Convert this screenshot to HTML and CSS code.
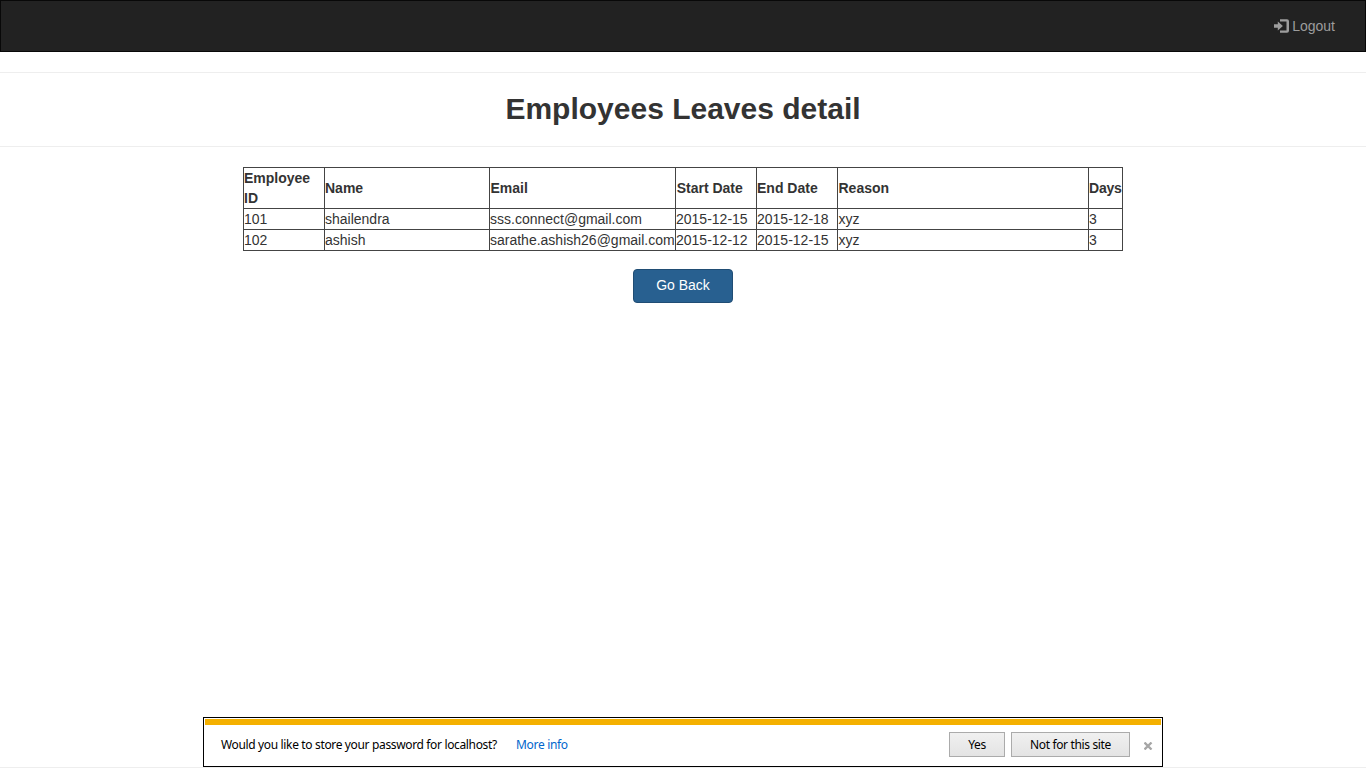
FILE: index.html
```html
<!DOCTYPE html>
<html lang="en">
<head>
<meta charset="utf-8">
<title>Employees Leaves detail</title>
<link rel="stylesheet" href="styles.css">
</head>
<body>
<nav class="navbar">
  <a class="logout">
    <svg class="login-icon" width="16" height="14" viewBox="0 0 16 14">
      <path d="M0 5.300h3.800V2.500L8.900 7 3.800 11.500V8.700H0z" fill="currentColor"/>
      <path d="M6 .2h7a2 2 0 0 1 2 2v9.600a2 2 0 0 1-2 2H6v-2.300h6.500v-9H6z" fill="currentColor"/>
    </svg>
    <span>Logout</span>
  </a>
</nav>
<header class="title"><h1>Employees Leaves detail</h1></header>
<main class="content">
  <table class="leaves">
    <colgroup><col class="c-id"><col class="c-name"><col class="c-email"><col class="c-date"><col class="c-date"><col class="c-reason"><col class="c-days"></colgroup>
    <thead>
      <tr><th>Employee ID</th><th>Name</th><th>Email</th><th class="start">Start Date</th><th>End Date</th><th>Reason</th><th class="days">Days</th></tr>
    </thead>
    <tbody>
      <tr><td>101</td><td>shailendra</td><td>sss.connect@gmail.com</td><td>2015-12-15</td><td>2015-12-18</td><td>xyz</td><td>3</td></tr>
      <tr><td>102</td><td>ashish</td><td>sarathe.ashish26@gmail.com</td><td>2015-12-12</td><td>2015-12-15</td><td>xyz</td><td>3</td></tr>
    </tbody>
  </table>
  <button class="go-back">Go Back</button>
</main>
<aside class="prompt">
  <div class="prompt-stripe"></div>
  <div class="prompt-row">
    <span class="question">Would you like to store your password for localhost?</span>
    <a class="more">More info</a>
    <button class="btn yes">Yes</button>
    <button class="btn never">Not for this site</button>
    <svg class="close" width="9" height="8" viewBox="0 0 9 8"><path d="M.5 .5l7 7M7.500 .5l-7 7" stroke="#a6a6a6" stroke-width="2.300"/></svg>
  </div>
</aside>
<div class="footer-line"></div>
</body>
</html>
```
FILE: styles.css
```css
* { box-sizing: border-box; }
body {
  margin: 0;
  height: 768px;
  display: flex;
  flex-direction: column;
  overflow: hidden;
  background: #fff;
  color: #333;
  font: 14px/20px "Liberation Sans", Arial, sans-serif;
}
.navbar {
  height: 52px;
  flex: none;
  display: flex;
  justify-content: flex-end;
  align-items: center;
  padding-right: 30px;
  background: #222;
  border: 1px solid #080808;
}
.logout { display: flex; align-items: center; gap: 2px; color: #9d9d9d; }
.title {
  flex: none;
  height: 75px;
  margin-top: 20px;
  border-top: 1px solid #eee;
  border-bottom: 1px solid #eee;
}
.title h1 {
  margin: 18px 0 0;
  font-size: 30px;
  line-height: 36px;
  font-weight: bold;
  text-align: center;
}
.content {
  flex: 1;
  display: flex;
  flex-direction: column;
  align-items: center;
  padding-top: 20px;
}
.leaves {
  width: 880px;
  table-layout: fixed;
  border-collapse: collapse;
}
.leaves th, .leaves td {
  padding: 0;
  border: 1px solid #444;
  text-align: left;
  white-space: nowrap;
}
.leaves th:first-child { white-space: normal; }
.leaves th:nth-child(3),
.leaves th:nth-child(6), .leaves td:nth-child(6) { padding-left: .5px; }
.leaves .start { padding-left: .7px; }
.leaves .days { letter-spacing: -.2px; }
.c-id { width: 81px; }
.c-name { width: 165px; }
.c-email { width: 186px; }
.c-date { width: 81px; }
.c-reason { width: 251px; }
.c-days { width: 34px; }
.go-back {
  width: 100px;
  height: 34px;
  margin-top: 18px;
  padding: 0 0 2px;
  border: 1px solid #204d74;
  border-radius: 4px;
  background: #286090;
  color: #fff;
  font: inherit;
}
.prompt {
  flex: none;
  align-self: center;
  width: 960px;
  height: 50px;
  padding: 1px;
  border: 1px solid #000;
  background: #fff;
  color: #000;
  font: 12px/16px "Noto Sans", sans-serif;
}
.prompt-stripe { height: 6px; background: #f4b000; }
.prompt-row { display: flex; align-items: center; height: 39px; padding: 0 8px 0 16px; }
.question { width: 295px; white-space: nowrap; letter-spacing: -.35px; }
.more { color: #06c; letter-spacing: -.32px; }
.btn {
  height: 25px;
  padding: 0;
  border: 1px solid #ababab;
  background: linear-gradient(#f0f0f0, #e4e4e4);
  color: #000;
  font: inherit;
  letter-spacing: -.35px;
}
.yes { width: 56px; margin-left: auto; }
.never { width: 119px; margin-left: 6px; }
.close { margin: 3px 0 0 14px; }
.footer-line { flex: none; height: 1px; background: #eee; }
```
